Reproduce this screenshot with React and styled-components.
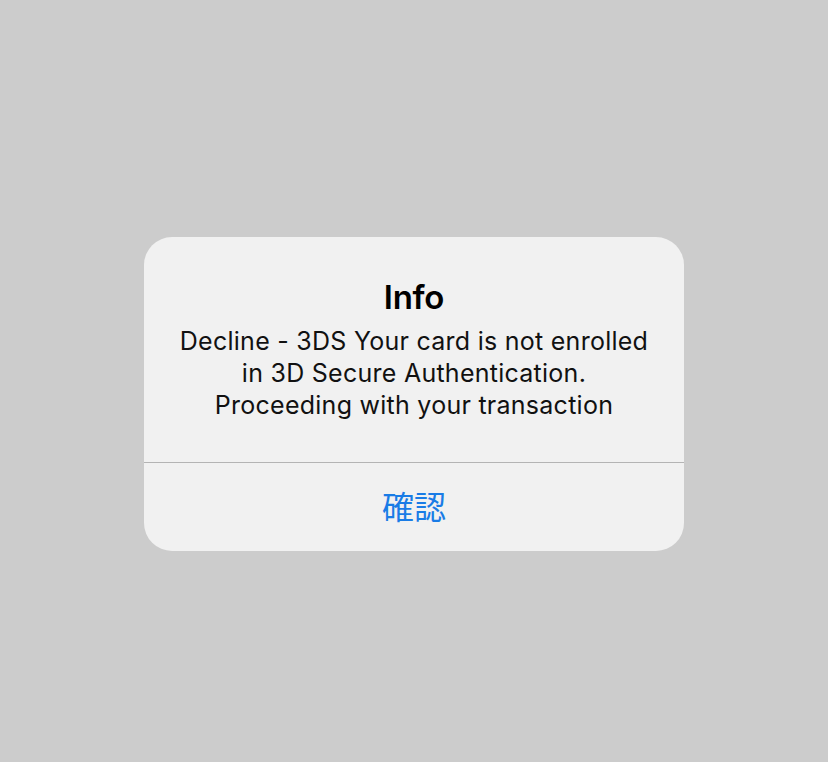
import React from "react";
import styled, { createGlobalStyle } from "styled-components";

const Global = createGlobalStyle`
  html, body { margin: 0; padding: 0; background: #cccccc; }
  body { font-family: "Inter", "Noto Sans CJK JP", sans-serif; }
`;

const Screen = styled.div`
  width: 828px;
  height: 762px;
  background: #cccccc;
  display: flex;
  justify-content: center;
  align-items: flex-start;
  padding-top: 237px;
  box-sizing: border-box;
`;

const Alert = styled.div`
  width: 540px;
  background: #f1f1f1;
  border-radius: 28px;
  overflow: hidden;
  display: flex;
  flex-direction: column;
`;

const Content = styled.div`
  padding: 40px 20px 41px;
  display: flex;
  flex-direction: column;
  align-items: center;
  gap: 8px;
  text-align: center;
`;

const Title = styled.div`
  font-family: "Inter", sans-serif;
  font-weight: 600;
  font-size: 33px;
  line-height: 40px;
  color: #000;
  letter-spacing: -0.3px;
`;

const Message = styled.div`
  font-family: "Inter", sans-serif;
  font-size: 25px;
  line-height: 32px;
  color: #111;
  letter-spacing: 0.26px;
`;

const Divider = styled.div`
  height: 1px;
  background: #b4b4b4;
`;

const Action = styled.button`
  height: 88px;
  border: none;
  background: transparent;
  color: #1a7ce6;
  font-family: "Noto Sans CJK JP", sans-serif;
  font-size: 32px;
  font-weight: 400;
  display: flex;
  align-items: center;
  justify-content: center;
  padding: 0 0 4px;
  cursor: pointer;
`;

export default function App() {
  return (
    <>
      <Global />
      <Screen>
        <Alert>
          <Content>
            <Title>Info</Title>
            <Message>
              Decline - 3DS Your card is not enrolled
              <br />
              in 3D Secure Authentication.
              <br />
              Proceeding with your transaction
            </Message>
          </Content>
          <Divider />
          <Action>確認</Action>
        </Alert>
      </Screen>
    </>
  );
}
